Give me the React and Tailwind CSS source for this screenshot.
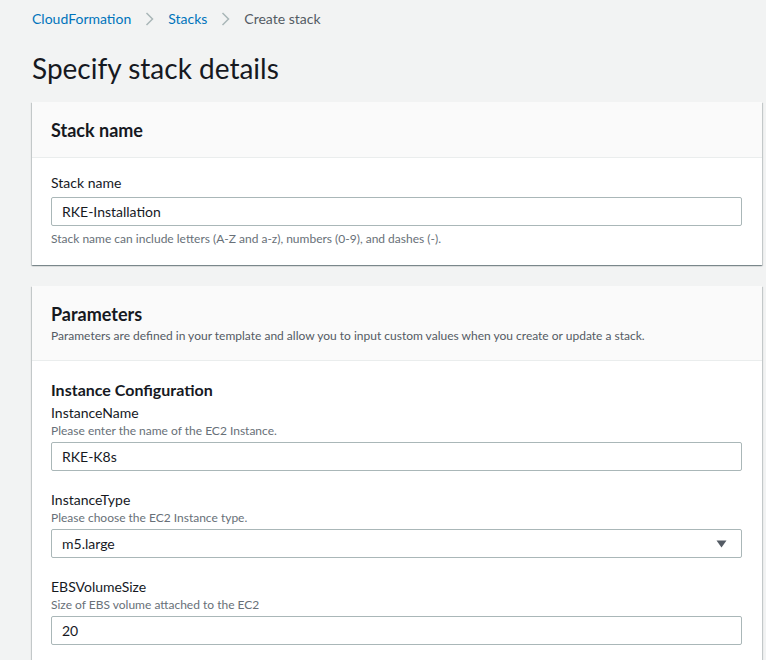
import React from "react";

function Field({ label, hint, value, select }) {
  return (
    <div className="flex flex-col">
      <div className="text-[14px] leading-[20px] text-[#16191f]">{label}</div>
      {hint && <div className="text-[12px] leading-[16px] text-[#687078]">{hint}</div>}
      <div className="mt-[3px] h-[29px] border border-[#aab7b8] rounded-[2px] bg-white flex items-center pl-[10px] pr-[14px] text-[14px] text-[#16191f]">
        <span className="flex-1">{value}</span>
        {select && (
          <svg width="11" height="8" viewBox="0 0 11 8">
            <path d="M0.5 0.5 H10.5 L5.5 7.5 Z" fill="#545b64" />
          </svg>
        )}
      </div>
    </div>
  );
}

export default function App() {
  return (
    <div className="min-h-[660px] bg-[#f2f3f3] pl-[32px] pr-[4px] pt-[9px] overflow-hidden" style={{ fontFamily: 'Lato, "Open Sans", "Liberation Sans", sans-serif' }}>
      <div className="flex items-center h-[20px] text-[14px] leading-[20px]">
        <span className="text-[#0073bb]">CloudFormation</span>
        <svg className="mx-[14px]" width="9" height="14" viewBox="0 0 9 14">
          <path d="M1.5 1 L7.5 7 L1.5 13" fill="none" stroke="#aab7b8" strokeWidth="1.5" />
        </svg>
        <span className="text-[#0073bb]">Stacks</span>
        <svg className="mx-[14px]" width="9" height="14" viewBox="0 0 9 14">
          <path d="M1.5 1 L7.5 7 L1.5 13" fill="none" stroke="#aab7b8" strokeWidth="1.5" />
        </svg>
        <span className="text-[#545b64]">Create stack</span>
      </div>
      <h1 className="mt-[21px] text-[28px] leading-[36px] text-[#16191f] font-normal">Specify stack details</h1>

      <div className="mt-[16px] bg-white shadow-[0_1px_1px_0_rgba(0,28,36,0.3),1px_1px_1px_0_rgba(0,28,36,0.15),-1px_1px_1px_0_rgba(0,28,36,0.15)]">
        <div className="bg-[#fafafa] border-b border-[#eaeded] h-[56px] px-[19px] flex items-center">
          <h2 className="text-[18px] font-bold text-[#16191f] leading-[24px]">Stack name</h2>
        </div>
        <div className="px-[19px] pt-[15px] pb-[18px] pr-[20px]">
          <div className="text-[14px] leading-[20px] text-[#16191f]">Stack name</div>
          <div className="mt-[4px] h-[29px] border border-[#aab7b8] rounded-[2px] bg-white flex items-center pl-[10px] text-[14px] text-[#16191f]">RKE-Installation</div>
          <div className="mt-[5px] text-[12px] leading-[16px] text-[#687078]">Stack name can include letters (A-Z and a-z), numbers (0-9), and dashes (-).</div>
        </div>
      </div>

      <div className="mt-[21px] bg-white shadow-[0_1px_1px_0_rgba(0,28,36,0.3),1px_1px_1px_0_rgba(0,28,36,0.15),-1px_1px_1px_0_rgba(0,28,36,0.15)]">
        <div className="bg-[#fafafa] border-b border-[#eaeded] h-[75px] px-[19px] pt-[16px]">
          <h2 className="text-[18px] font-bold text-[#16191f] leading-[24px]">Parameters</h2>
          <div className="text-[12px] leading-[16px] text-[#545b64] mt-[2px]">Parameters are defined in your template and allow you to input custom values when you create or update a stack.</div>
        </div>
        <div className="px-[19px] pr-[20px] pt-[18px] pb-[20px] flex flex-col">
          <h3 className="text-[16px] font-bold leading-[22px] text-[#16191f] mb-[2px]">Instance Configuration</h3>
          <div className="flex flex-col gap-[19px]">
            <Field label="InstanceName" hint="Please enter the name of the EC2 Instance." value="RKE-K8s" />
            <Field label="InstanceType" hint="Please choose the EC2 Instance type." value="m5.large" select />
            <Field label="EBSVolumeSize" hint="Size of EBS volume attached to the EC2" value="20" />
          </div>
        </div>
      </div>
    </div>
  );
}
